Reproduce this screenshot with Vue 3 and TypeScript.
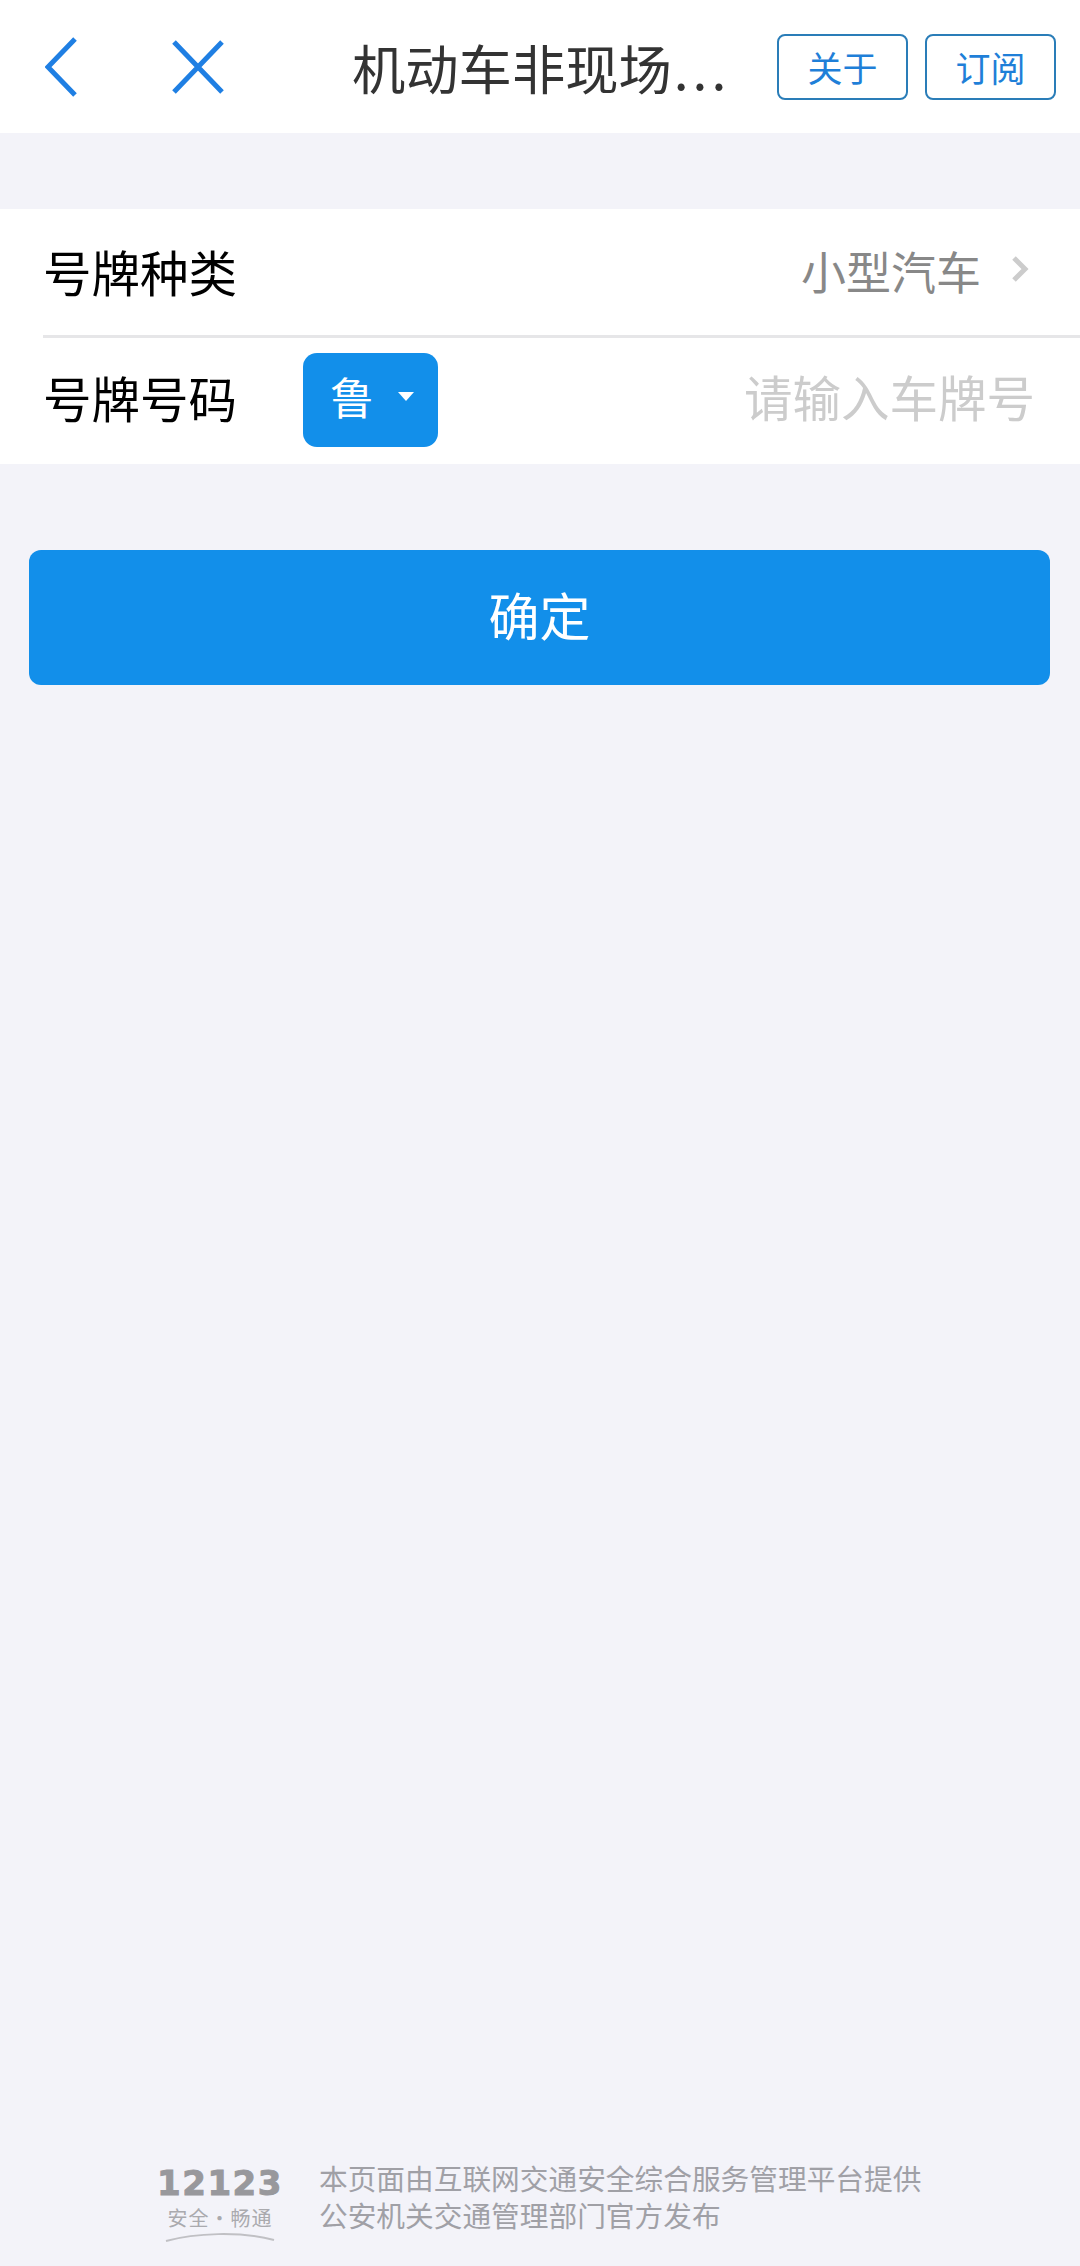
<script setup lang="ts">
const footerLines: string[] = ['本页面由互联网交通安全综合服务管理平台提供', '公安机关交通管理部门官方发布']
</script>

<template>
  <div class="page">
    <header class="nav">
      <button class="icon back" aria-label="返回">
        <svg width="32" height="60" viewBox="0 0 32 60"><path d="M30 2 3 30l27 28" /></svg>
      </button>
      <button class="icon close" aria-label="关闭">
        <svg width="52" height="54" viewBox="0 0 52 54"><path d="M2 2l48 50M50 2 2 52" /></svg>
      </button>
      <h1 class="title">机动车非现场<span class="dots">...</span></h1>
      <div class="actions">
        <button class="outline first">关于</button>
        <button class="outline">订阅</button>
      </div>
    </header>

    <section class="card">
      <div class="row row-top">
        <span class="label">号牌种类</span>
        <span class="value">小型汽车</span>
        <svg class="chev" width="18" height="26" viewBox="0 0 18 26"><path d="M3 2l11 11L3 24" /></svg>
      </div>
      <div class="divider"></div>
      <div class="row row-bottom">
        <span class="label">号牌号码</span>
        <div class="province">
          <span class="province-name">鲁</span>
          <span class="caret"></span>
        </div>
        <span class="placeholder">请输入车牌号</span>
      </div>
    </section>

    <button class="confirm">确定</button>

    <footer class="footer">
      <div class="logo">
        <div class="logo-num">12123</div>
        <div class="logo-sub">安全·畅通</div>
        <svg class="logo-arc" width="110" height="10" viewBox="0 0 110 10"><path d="M1 9C30 1 75-1 109 8" /></svg>
      </div>
      <div class="footer-text">
        <p v-for="line in footerLines" :key="line">{{ line }}</p>
      </div>
    </footer>
  </div>
</template>

<style>
html, body { margin: 0; background: #f3f3f9; }
</style>

<style scoped>
.page {
  width: 1080px;
  height: 2266px;
  background: #f3f3f9;
  display: flex;
  flex-direction: column;
  font-family: "Noto Sans CJK SC", "Liberation Sans", sans-serif;
  overflow: hidden;
}
button { font-family: inherit; padding: 0; background: none; border: 0; }
.nav {
  height: 133px;
  background: #fff;
  display: flex;
  align-items: center;
  flex: none;
}
.icon { display: flex; }
.icon path { fill: none; stroke: #1f7fe3; stroke-width: 5; }
.back { margin-left: 45px; }
.close { margin-left: 95px; }
.title {
  margin: 0 0 0 128px;
  font-size: 53.3px;
  font-weight: 400;
  color: #333;
  white-space: nowrap;
  line-height: 60px;
  width: 427px;
}
.dots { letter-spacing: 4px; margin-left: 2px; }
.actions { display: flex; gap: 17px; margin-left: -2px; }
.outline {
  width: 131px;
  height: 66px;
  border: 2px solid #2a7db8;
  border-radius: 8px;
  color: #1f7fd8;
  font-size: 35px;
  line-height: 60px;
  box-sizing: border-box;
  background: #fff;
}
.card {
  margin-top: 76px;
  background: #fff;
  flex: none;
}
.row {
  display: flex;
  align-items: center;
  padding-left: 43px;
}
.row-top { height: 126px; padding-right: 51px; padding-bottom: 2px; box-sizing: border-box; }
.row-bottom { height: 126px; padding-right: 45px; padding-bottom: 8px; box-sizing: border-box; }
.divider { height: 3px; background: #e6e6e8; margin-left: 43px; }
.label { font-size: 48.5px; color: #000; line-height: 60px; white-space: nowrap; }
.value { margin-left: auto; font-size: 45px; color: #888; line-height: 60px; }
.chev { margin-left: 30px; margin-top: -4px; }
.chev path { fill: none; stroke: #ccc; stroke-width: 5; }
.province {
  margin-left: 66px;
  margin-top: 5px;
  width: 135px;
  height: 94px;
  border-radius: 14px;
  background: #128fea;
  display: flex;
  align-items: center;
  box-sizing: border-box;
  padding-left: 27px;
  padding-bottom: 6px;
}
.province-name { color: #fff; font-size: 44px; line-height: 60px; margin-bottom: 2px; }
.caret {
  margin-left: 24px;
  width: 0;
  height: 0;
  border-left: 8px solid transparent;
  border-right: 8px solid transparent;
  border-top: 9px solid #fff;
}
.placeholder { margin-left: auto; margin-bottom: 2px; font-size: 48.5px; color: #ccc; line-height: 60px; }
.confirm {
  margin: 86px 30px 0 29px;
  height: 135px;
  flex: none;
  background: #128fea;
  border-radius: 12px;
  color: #fff;
  font-size: 51px;
  padding-bottom: 8px;
  box-sizing: border-box;
}
.footer {
  margin-top: auto;
  padding: 0 0 24px 156px;
  display: flex;
  align-items: flex-start;
  gap: 35px;
}
.logo { width: 128px; display: flex; flex-direction: column; align-items: center; }
.logo-num {
  font-family: "DejaVu Sans", sans-serif;
  font-weight: 700;
  font-size: 34px;
  letter-spacing: 1.5px;
  line-height: 28px;
  color: #98989c;
  -webkit-text-stroke: 1px #98989c;
  margin-top: 10px;
  white-space: nowrap;
}
.logo-sub { font-size: 20px; letter-spacing: 1px; line-height: 26px; color: #aaaaae; margin-top: 8px; white-space: nowrap; }
.logo-arc { margin-top: 1px; }
.logo-arc path { fill: none; stroke: #c0c0c4; stroke-width: 2; }
.footer-text p {
  margin: 0;
  font-size: 28.7px;
  line-height: 37px;
  color: #a0a0a6;
  white-space: nowrap;
}
</style>
